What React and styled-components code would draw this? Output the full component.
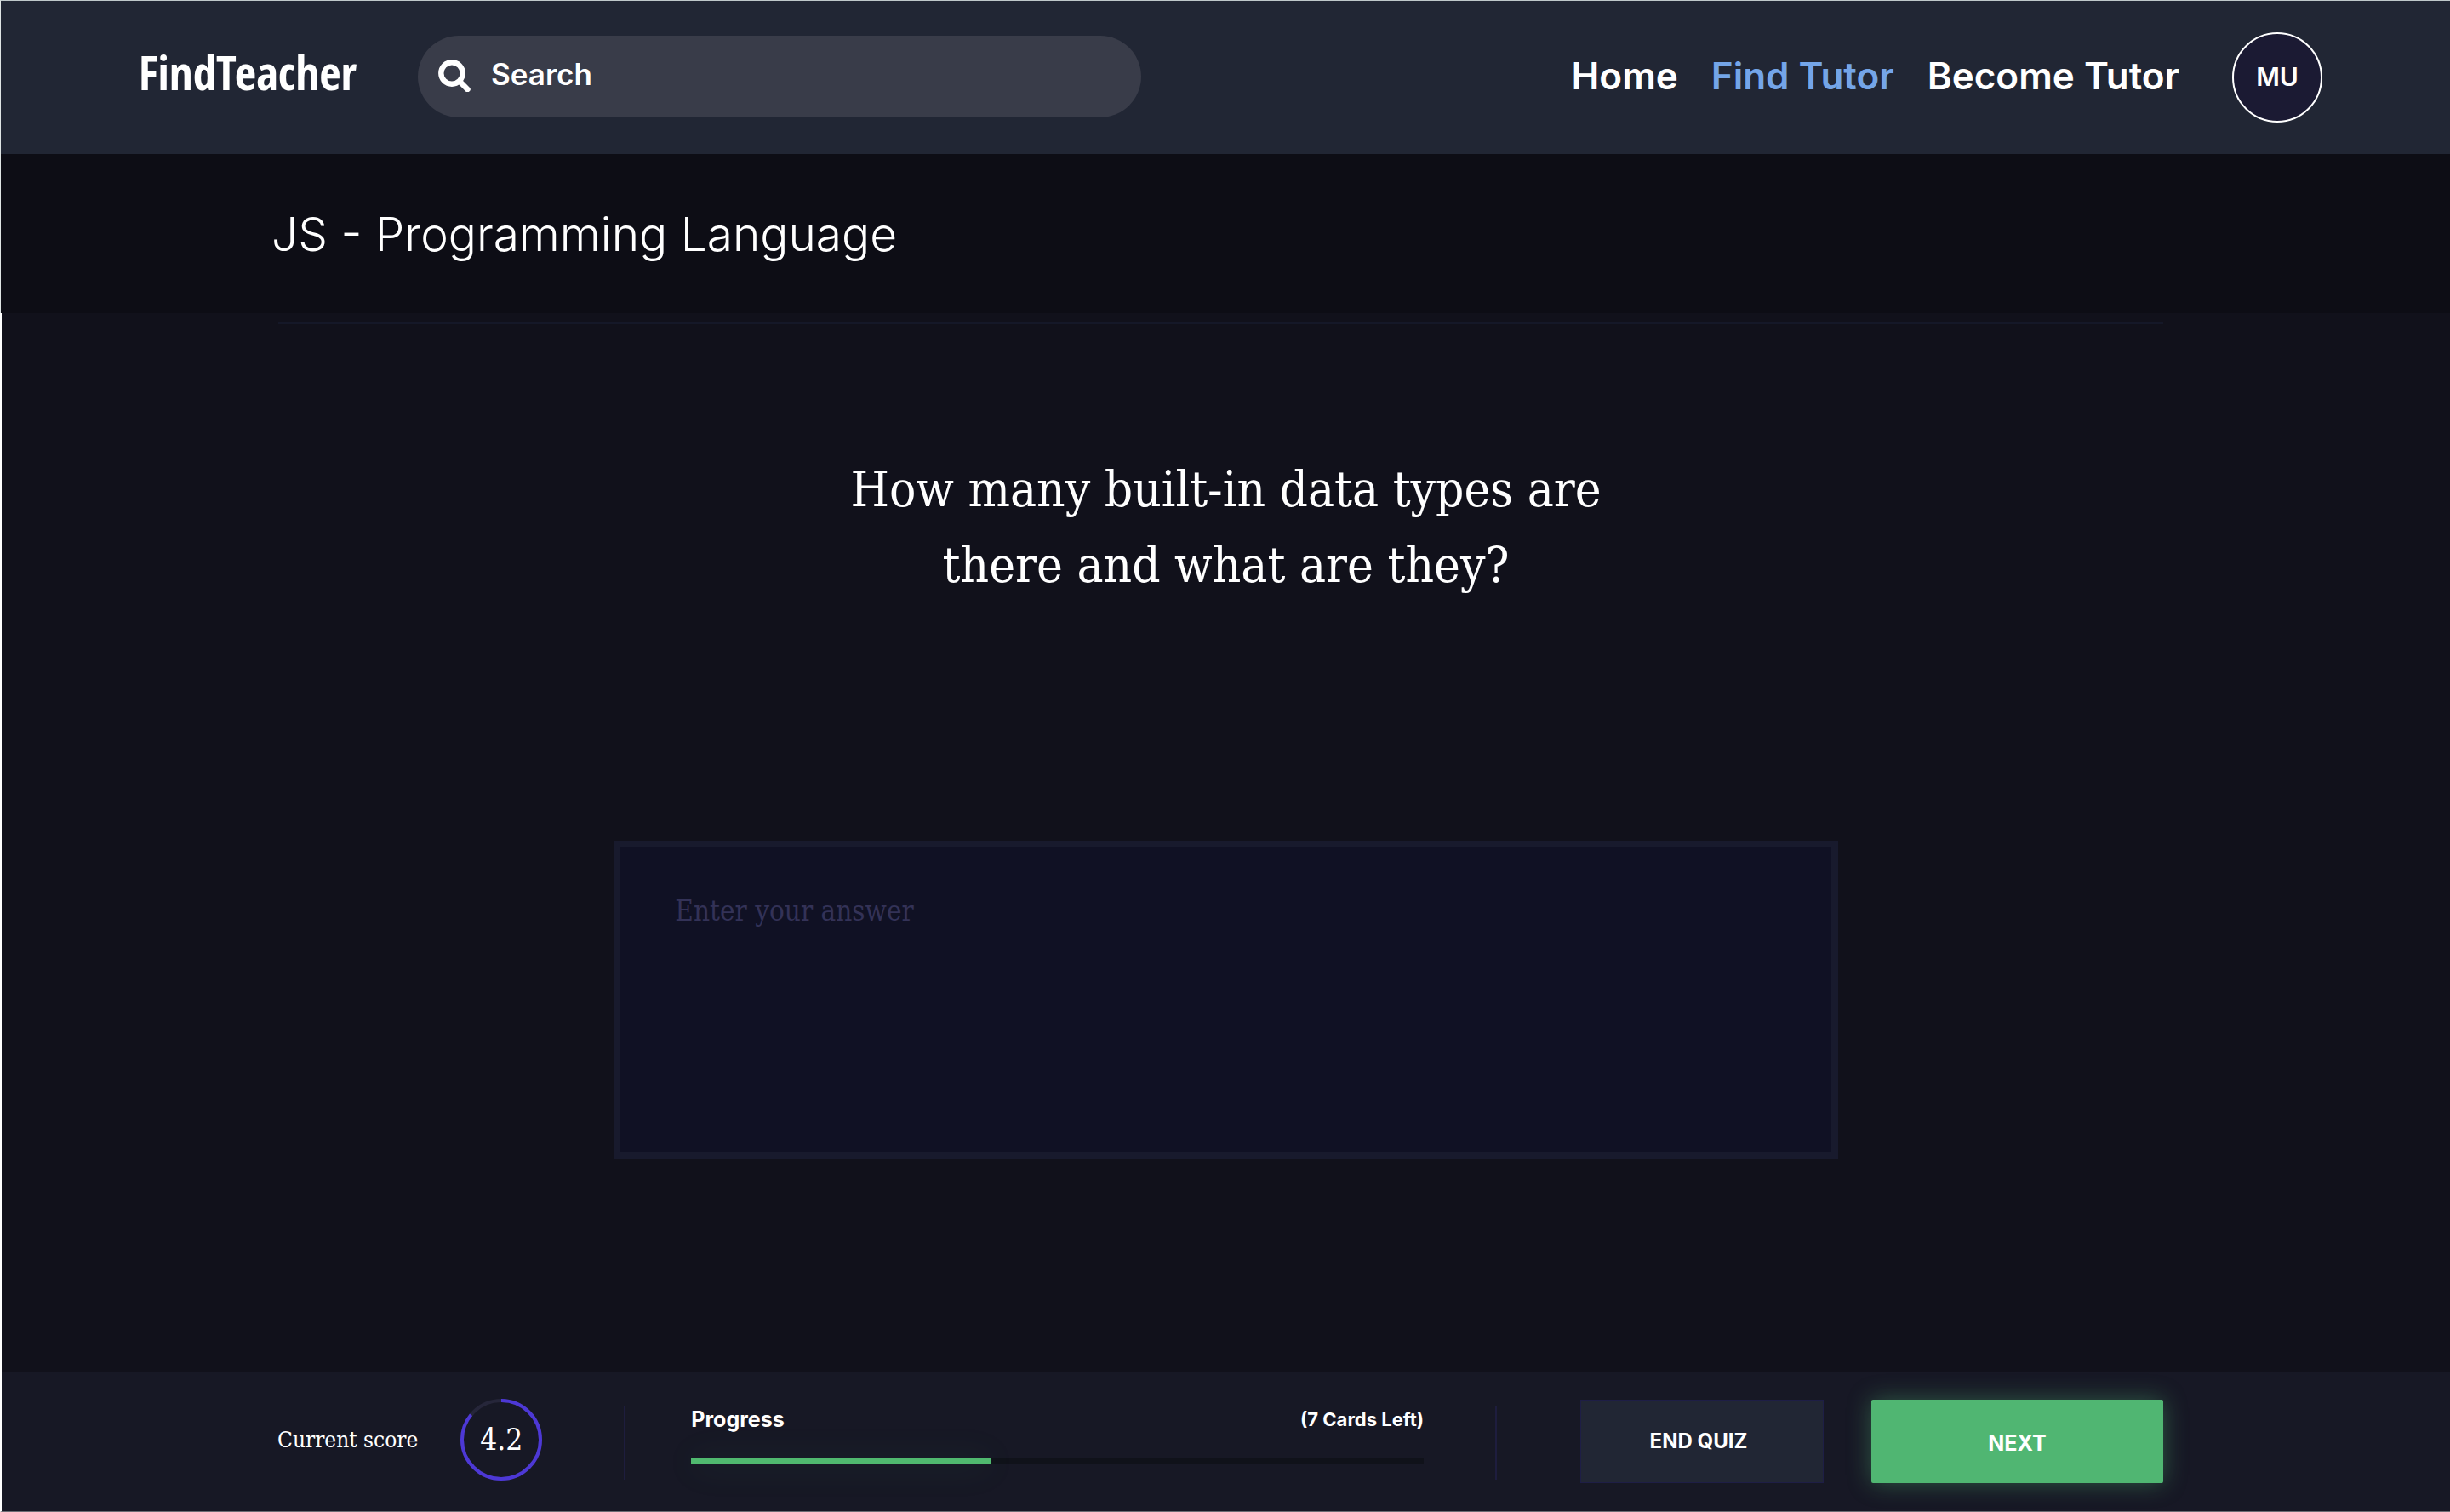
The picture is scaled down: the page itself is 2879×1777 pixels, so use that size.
import React from 'react';
import styled, { createGlobalStyle } from 'styled-components';

const sans = 'Inter, "Liberation Sans", sans-serif';
const slab = '"DejaVu Serif Condensed", "DejaVu Serif", serif';

const GlobalStyle = createGlobalStyle`
  *, *::before, *::after { box-sizing: border-box; }
  body { margin: 0; background: #11111b; color: #fff; font-family: ${sans}; }
`;

const Page = styled.div`
  display: flex;
  flex-direction: column;
  min-height: 100vh;
`;

const Header = styled.header`
  display: flex;
  align-items: center;
  min-height: 181px;
  padding: 0 150px 0 162px;
  border-top: 1px solid #bfc8ca;
  border-left: 1px solid #dfe4e4;
  background: #212634;
`;

const Logo = styled.a`
  flex: none;
  width: 328px;
  padding-bottom: 12px;
  color: #fff;
  font: 700 55px/64px "Open Sans Condensed", "Open Sans", sans-serif;
  text-decoration: none;
`;

const SearchBar = styled.label`
  display: flex;
  align-items: center;
  flex: 0 1 850px;
  height: 96px;
  margin-bottom: 2px;
  padding: 0 24px 6px;
  border-radius: 48px;
  background: #393c49;
`;

const SearchIcon = styled.svg`
  flex: none;
  width: 38px;
  height: 38px;
  margin-top: 4px;
`;

const SearchInput = styled.input`
  flex: 1;
  min-width: 0;
  margin-left: 24px;
  padding: 0;
  border: 0;
  outline: 0;
  background: transparent;
  color: #fff;
  font: 600 35px/44px ${sans};
  &::placeholder { color: #fff; opacity: 1; }
`;

const Nav = styled.nav`
  display: flex;
  gap: 39px;
  margin: 0 62px 4px auto;
`;

const NavLink = styled.a`
  color: ${(p) => (p.$active ? '#74a5e8' : '#fff')};
  font-size: 44px;
  font-weight: 600;
  line-height: 52px;
  text-decoration: none;
  white-space: nowrap;
`;

const Avatar = styled.button`
  flex: none;
  width: 106px;
  height: 106px;
  padding: 0 0 2px;
  border: 2px solid #fff;
  border-radius: 50%;
  background: #1b1a33;
  color: #fff;
  font: 600 30px/36px ${sans};
`;

const TitleBar = styled.div`
  display: flex;
  align-items: center;
  min-height: 187px;
  padding: 0 318px;
  border-left: 1px solid #dfe4e4;
  background: #0d0d15;
`;

const Title = styled.h1`
  margin: 0;
  font-size: 55px;
  font-weight: 300;
  line-height: 66px;
`;

const Main = styled.main`
  display: flex;
  flex: 1;
  flex-direction: column;
  align-items: center;
  border-left: 2px solid #fff;
  background: #11111b;
`;

const Rule = styled.hr`
  align-self: stretch;
  height: 3px;
  margin: 10px 337px 150px 325px;
  border: 0;
  background: #151828;
`;

const Question = styled.h2`
  max-width: 960px;
  margin: 0 0 279px;
  font: 400 58px/89px ${slab};
  text-align: center;
`;

const Answer = styled.textarea`
  width: 50%;
  height: 374px;
  padding: 48px 64px;
  border: 8px solid #181a2d;
  border-radius: 0;
  outline: 0;
  background: #101124;
  color: #fff;
  font: 400 33px/54px ${slab};
  resize: none;
  &::placeholder { color: #333257; opacity: 1; }
`;

const Footer = styled.footer`
  display: flex;
  align-items: center;
  min-height: 165px;
  padding: 0 337px 0 324px;
  border-bottom: 1px solid #6b6c73;
  border-left: 2px solid #fff;
  background: #171825;
`;

const Score = styled.div`
  display: flex;
  align-items: center;
  gap: 50px;
  padding-bottom: 4px;
  font: 400 26px/34px ${slab};
`;

const Ring = styled.div`
  display: grid;
  place-items: center;
  width: 96px;
  height: 96px;
  font-size: 35px;
  & > * { grid-area: 1 / 1; }
`;

const Divider = styled.span`
  flex: none;
  width: 2px;
  height: 86px;
  margin: ${(p) => (p.$wide ? '4px 98px 0 84px' : '4px 77px 0 96px')};
  background: #1e1d3e;
`;

const Progress = styled.div`
  flex: 1;
  padding-bottom: 14px;
`;

const ProgressLabels = styled.div`
  display: flex;
  align-items: center;
  justify-content: space-between;
  margin-bottom: 30px;
  font-size: 25px;
  font-weight: 700;
  line-height: 30px;
`;

const CardsLeft = styled.span`
  font-size: 22px;
`;

const Track = styled.div`
  height: 8px;
  background: #10121a;
`;

const Fill = styled.div`
  width: 41%;
  height: 100%;
  background: #50b96f;
  box-shadow: 0 2px 40px rgba(80, 185, 111, 0.16);
`;

const Actions = styled.div`
  display: flex;
  gap: 56px;
`;

const Action = styled.button`
  width: ${(p) => (p.$primary ? 343 : 286)}px;
  height: 98px;
  padding: ${(p) => (p.$primary ? '4px 0 0' : '0 8px 0 0')};
  border: ${(p) => (p.$primary ? '0' : '1px solid #1e1e46')};
  border-radius: ${(p) => (p.$primary ? 2 : 0)}px;
  background: ${(p) => (p.$primary ? '#50b672' : '#212634')};
  box-shadow: ${(p) => (p.$primary ? '0 0 28px rgba(80, 182, 114, 0.42)' : 'none')};
  color: #fff;
  font: ${(p) => (p.$primary ? '700 25px/30px' : '700 24px/30px')} ${sans};
`;

export default function App() {
  return (
    <Page>
      <GlobalStyle />
      <Header>
        <Logo href="#">FindTeacher</Logo>
        <SearchBar>
          <SearchIcon viewBox="0 0 38 38" fill="none" stroke="#fff" aria-hidden="true">
            <circle cx="16" cy="16" r="12.7" strokeWidth="6.4" />
            <path d="M26 26.5 34.4 35" strokeWidth="6.6" strokeLinecap="round" />
          </SearchIcon>
          <SearchInput type="search" placeholder="Search" aria-label="Search" />
        </SearchBar>
        <Nav>
          <NavLink href="#">Home</NavLink>
          <NavLink href="#" $active>Find Tutor</NavLink>
          <NavLink href="#">Become Tutor</NavLink>
        </Nav>
        <Avatar type="button">MU</Avatar>
      </Header>
      <TitleBar>
        <Title>JS - Programming Language</Title>
      </TitleBar>
      <Main>
        <Rule />
        <Question id="question">How many built-in data types are there and what are they?</Question>
        <Answer placeholder="Enter your answer" aria-labelledby="question" />
      </Main>
      <Footer>
        <Score>
          <span>Current score</span>
          <Ring>
            <svg width="96" height="96" viewBox="0 0 96 96" fill="none" strokeWidth="4" aria-hidden="true">
              <circle cx="48" cy="48" r="46" stroke="#26263a" />
              <circle cx="48" cy="48" r="46" stroke="#4d38d6" pathLength="100" strokeDasharray="86 14" transform="rotate(-90 48 48)" />
            </svg>
            <span>4.2</span>
          </Ring>
        </Score>
        <Divider />
        <Progress>
          <ProgressLabels>
            <span id="progress-label">Progress</span>
            <CardsLeft>(7 Cards Left)</CardsLeft>
          </ProgressLabels>
          <Track role="progressbar" aria-labelledby="progress-label" aria-valuenow={41} aria-valuemin={0} aria-valuemax={100}>
            <Fill />
          </Track>
        </Progress>
        <Divider $wide />
        <Actions>
          <Action type="button">END QUIZ</Action>
          <Action type="button" $primary>NEXT</Action>
        </Actions>
      </Footer>
    </Page>
  );
}
